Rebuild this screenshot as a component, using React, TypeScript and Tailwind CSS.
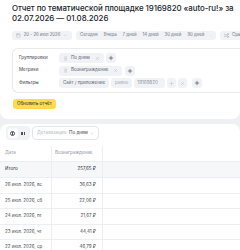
import { Plus, X, GripVertical, ChevronDown, Calendar, Shuffle } from 'lucide-react';

const rows = [
  { date: '26 июл. 2026, вс', value: '36,63 ₽' },
  { date: '25 июл. 2026, сб', value: '22,06 ₽' },
  { date: '24 июл. 2026, пт', value: '21,67 ₽' },
  { date: '23 июл. 2026, чт', value: '44,41 ₽' },
  { date: '22 июл. 2026, ср', value: '46,79 ₽' },
];

const periods = ['Сегодня', 'Вчера', '7 дней', '14 дней', '30 дней', '90 дней'];

function Chip({ label }: { label: string }) {
  return (
    <div className="flex items-center gap-[3px] h-[10px] px-[4px] rounded-[3px] bg-[#f1f2f5] text-[4.5px] text-[#5b6170]">
      <GripVertical size={5} strokeWidth={1.5} className="text-[#b4b9c3]" />
      <span>{label}</span>
      <X size={5} strokeWidth={1.5} className="ml-[2px] text-[#a2a8b3]" />
    </div>
  );
}

function AddBtn() {
  return (
    <div className="flex items-center justify-center w-[10px] h-[10px] rounded-[3px] bg-[#f1f2f5]">
      <Plus size={6} strokeWidth={2.2} className="text-[#2b2f38]" />
    </div>
  );
}

export default function App() {
  return (
    <div className="w-[240px] h-[250px] overflow-hidden bg-[#eef0f3] font-['Inter',sans-serif] text-[#21242b]">

      {/* ── top block: title, period, settings ───────────────── */}
      <div className="bg-white rounded-b-[8px] pb-[10px]">
        <div className="px-[12px] pt-[3px] text-[7.9px] leading-[10px] font-medium tracking-[-0.05px] whitespace-nowrap">
          Отчет по тематической площадке 19169820 «auto-ru!» за
          <br />02.07.2026 — 01.08.2026
        </div>

        <div className="flex items-center gap-[4px] pl-[12px] mt-[8px] h-[9px] text-[4.3px] text-[#6b7180] whitespace-nowrap">
          <div className="flex items-center gap-[3px] h-[9px] w-[60px] shrink-0 px-[4px] rounded-[3px] bg-[#f1f2f5]">
            <Calendar size={5} strokeWidth={1.5} className="text-[#9aa0ab]" />
            <span>20 - 26 июл 2026</span>
            <ChevronDown size={5} strokeWidth={1.5} className="ml-auto text-[#9aa0ab]" />
          </div>
          <div className="flex items-center gap-[6px] h-[9px] w-[140px] shrink-0 px-[4px] rounded-[3px] bg-[#f1f2f5]">
            {periods.map(p => <span key={p}>{p}</span>)}
            <ChevronDown size={5} strokeWidth={1.5} className="ml-auto text-[#9aa0ab]" />
          </div>
          <div className="flex items-center gap-[3px] h-[9px] pl-[4px] rounded-l-[3px] bg-[#f1f2f5] flex-1 overflow-hidden">
            <Shuffle size={5} strokeWidth={1.5} className="shrink-0 text-[#6b7180]" />
            <span>Сра</span>
          </div>
        </div>

        <div className="ml-[12px] mt-[8px] border border-r-0 border-[#e8eaee] rounded-l-[6px] pl-[6px] pt-[4px] pb-[4px] flex flex-col gap-[2.5px] text-[4.5px] whitespace-nowrap">
          <div className="flex items-center h-[10px]">
            <span className="w-[40px] text-[#3a3f4a]">Группировки</span>
            <div className="flex items-center gap-[2px]">
              <Chip label="По дням" />
              <AddBtn />
            </div>
          </div>
          <div className="flex items-center h-[10px]">
            <span className="w-[40px] text-[#3a3f4a]">Метрики</span>
            <div className="flex items-center gap-[3px]">
              <Chip label="Вознаграждение" />
              <AddBtn />
            </div>
          </div>
          <div className="flex items-center h-[10px]">
            <span className="w-[40px] text-[#3a3f4a]">Фильтры</span>
            <div className="flex items-center gap-[2px] text-[#5b6170]">
              <div className="flex items-center h-[10px] px-[4px] rounded-[3px] bg-[#f1f2f5]">Сайт / приложение</div>
              <div className="flex items-center h-[10px] px-[4px] rounded-[3px] bg-[#f1f2f5] text-[#a2a8b3]">равно</div>
              <div className="flex items-center h-[10px] w-[31px] px-[3px] rounded-[3px] bg-[#f1f2f5] text-[#8d93a0]">19169820</div>
              <div className="flex items-center justify-center h-[10px] w-[9px] rounded-[3px] bg-[#f1f2f5]">
                <Plus size={5} strokeWidth={1.5} className="text-[#a2a8b3]" />
              </div>
              <div className="flex items-center justify-center h-[10px] w-[9px] rounded-[3px] bg-[#f1f2f5]">
                <X size={5} strokeWidth={1.5} className="text-[#a2a8b3]" />
              </div>
              <div className="ml-[3px]"><AddBtn /></div>
            </div>
          </div>
        </div>

        <button className="ml-[13px] mt-[6px] h-[10px] px-[4px] rounded-[3px] bg-[#ffdb4d] text-[4.5px] text-[#21242b] flex items-center">
          Обновить отчёт
        </button>
      </div>

      {/* ── bottom block: table ───────────────────────────────── */}
      <div className="mt-[5px] bg-white rounded-t-[8px] pt-[2px]">
        <div className="flex items-center gap-[2px] pl-[6px] h-[14px] text-[4.5px] whitespace-nowrap">
          <div className="flex items-center h-[14px] w-[24px] p-[2px] gap-[1px] rounded-[4px] bg-[#f1f2f5]">
            <div className="flex items-center justify-center h-[10px] w-[10px] rounded-[3px] bg-white">
              <div className="w-[5px] h-[5px] rounded-full border border-[#4b505c] flex">
                <div className="w-[1px] h-full bg-[#4b505c] mx-auto" />
              </div>
            </div>
            <div className="flex items-center justify-center h-[10px] w-[10px]">
              <div className="grid grid-cols-2 gap-[0.5px] w-[4px] h-[3px]">
                <div className="bg-[#4b505c]" /><div className="bg-[#4b505c]" />
                <div className="bg-[#4b505c]" /><div className="bg-[#4b505c]" />
              </div>
            </div>
          </div>
          <div className="flex items-center gap-[2px] h-[14px] w-[67px] px-[4px] rounded-[4px] border border-[#e3e5ea]">
            <span className="text-[#b0b5bf]">Детализация:</span>
            <span className="text-[#3a3f4a]">По дням</span>
            <ChevronDown size={5} strokeWidth={1.5} className="ml-auto text-[#9aa0ab]" />
          </div>
        </div>

        <div className="mt-[6px] text-[4.5px] whitespace-nowrap">
          <div className="flex h-[16px] border-b border-[#eceef1] text-[#8d93a0]">
            <div className="w-[52px] pl-[5px] flex items-center border-r border-[#eceef1]">Дата</div>
            <div className="w-[51px] pl-[3px] flex items-center border-r border-[#eceef1]">Вознаграждение</div>
          </div>
          <div className="flex h-[16px] border-b border-[#eceef1] bg-[#f6f7f9] text-[#2b2f38]">
            <div className="w-[52px] pl-[5px] flex items-center border-r border-[#eceef1]">Итого</div>
            <div className="w-[51px] pr-[6px] flex items-center justify-end border-r border-[#eceef1]">257,65 ₽</div>
          </div>
          {rows.map(r => (
            <div key={r.date} className="flex h-[15.6px] border-b border-[#eceef1] text-[#3a3f4a]">
              <div className="w-[52px] pl-[5px] flex items-center border-r border-[#eceef1]">{r.date}</div>
              <div className="w-[51px] pr-[6px] flex items-center justify-end border-r border-[#eceef1]">{r.value}</div>
            </div>
          ))}
          <div className="h-[1px] bg-[#f3c2cc]" />
        </div>
      </div>
    </div>
  );
}
